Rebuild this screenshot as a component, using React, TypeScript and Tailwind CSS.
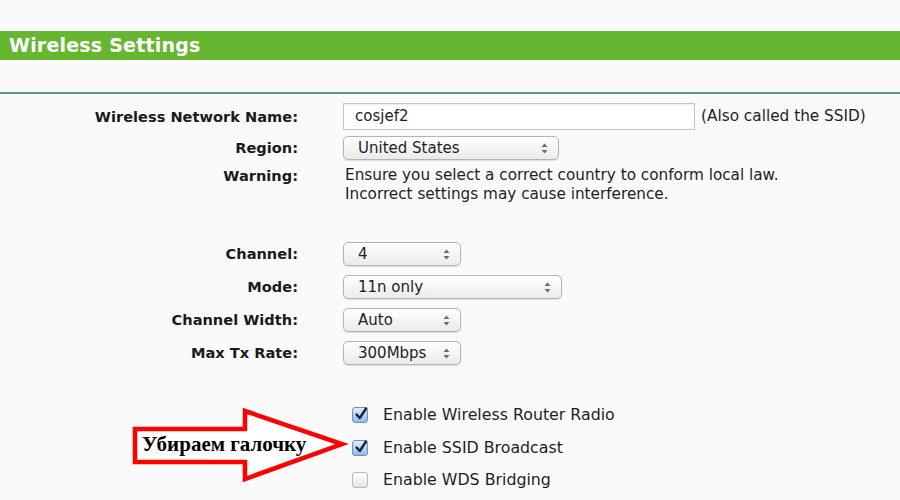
import type { ReactNode } from 'react';

function Arrows() {
  return (
    <svg width="7" height="11" viewBox="0 0 7 11" className="shrink-0">
      <path d="M3.5 0.5 L6.5 4 L0.5 4 Z" fill="#6b6b6b" />
      <path d="M3.5 10.5 L6.5 7 L0.5 7 Z" fill="#6b6b6b" />
    </svg>
  );
}

function Select({ value, width }: { value: string; width: string }) {
  return (
    <div
      className={`${width} h-[24px] flex items-center justify-between pl-[14px] pr-[10px] rounded-[5px] border border-[#b4b4b4] bg-gradient-to-b from-white to-[#ebebeb] shadow-[0_1px_1px_rgba(0,0,0,0.12)] text-[15px] text-[#1e1e1e]`}
    >
      <span>{value}</span>
      <Arrows />
    </div>
  );
}

function Row({ label, children, h = 'h-[24px]' }: { label: string; children: ReactNode; h?: string }) {
  return (
    <div className={`flex items-center ${h}`}>
      <div className="w-[298px] text-right font-bold text-[14.6px] text-[#1a1a1a]">{label}</div>
      <div className="ml-[45px] flex items-center">{children}</div>
    </div>
  );
}

function Check({ checked, label }: { checked: boolean; label: string }) {
  return (
    <div className="flex items-center h-[24px] pl-[352px]">
      {checked ? (
        <div className="w-[16px] h-[16px] rounded-[3px] border border-[#6f8fb8] bg-gradient-to-b from-[#e2eefb] to-[#8fbbec] relative">
          <svg width="16" height="16" viewBox="0 0 16 16" className="absolute -top-[2px] left-[0px]">
            <path d="M3.5 8.5 L6.8 12 L13 2.5" fill="none" stroke="#17223a" strokeWidth="2.4" strokeLinecap="round" strokeLinejoin="round" />
          </svg>
        </div>
      ) : (
        <div className="w-[16px] h-[16px] rounded-[3px] border border-[#b8b8b8] bg-gradient-to-b from-white to-[#e4e4e4]" />
      )}
      <span className="ml-[15px] text-[15.8px] text-[#1e1e1e]">{label}</span>
    </div>
  );
}

export default function App() {
  return (
    <div className="relative w-[900px] h-[500px] overflow-hidden bg-[#fafafa] font-['DejaVu_Sans',Verdana,sans-serif]">
      <div className="h-[31px]" />
      <div className="h-[29px] bg-[#66b630] flex items-center pl-[9px]">
        <h1 className="text-white font-bold text-[19px] tracking-[0.2px]">Wireless Settings</h1>
      </div>
      <div className="h-[32px]" />
      <div className="h-[2px] bg-[#5d9f76]" />

      <div className="pt-[9px]">
        <Row label="Wireless Network Name:" h="h-[27px]">
          <div className="w-[352px] h-[27px] border border-[#c4c4c4] bg-white flex items-center pl-[11px] text-[15px] text-[#1e1e1e] shadow-[inset_0_1px_1px_rgba(0,0,0,0.08)]">
            cosjef2
          </div>
          <span className="ml-[6px] text-[15.3px] text-[#1e1e1e]">(Also called the SSID)</span>
        </Row>
        <div className="h-[6px]" />
        <Row label="Region:">
          <Select value="United States" width="w-[216px]" />
        </Row>
        <div className="flex mt-[6px] text-[15.25px] leading-[19px]">
          <div className="w-[298px] text-right font-bold text-[14.6px] text-[#1a1a1a]">Warning:</div>
          <div className="ml-[47px] text-[#1e1e1e]">
            <div>Ensure you select a correct country to conform local law.</div>
            <div>Incorrect settings may cause interference.</div>
          </div>
        </div>

        <div className="h-[38px]" />
        <div className="flex flex-col gap-[9px]">
          <Row label="Channel:">
            <Select value="4" width="w-[118px]" />
          </Row>
          <Row label="Mode:">
            <Select value="11n only" width="w-[219px]" />
          </Row>
          <Row label="Channel Width:">
            <Select value="Auto" width="w-[118px]" />
          </Row>
          <Row label="Max Tx Rate:">
            <Select value="300Mbps" width="w-[118px]" />
          </Row>
        </div>

        <div className="h-[38px]" />
        <div className="flex flex-col gap-[8.5px]">
          <Check checked label="Enable Wireless Router Radio" />
          <Check checked label="Enable SSID Broadcast" />
          <Check checked={false} label="Enable WDS Bridging" />
        </div>
      </div>

      {/* annotation arrow */}
      <svg width="230" height="80" viewBox="0 0 230 80" className="absolute left-[131px] top-[406px]">
        <path
          d="M4 23 L114 23 L114 5 L211 38 L114 73 L114 56 L4 56 Z"
          fill="#ffffff"
          stroke="#ff0000"
          strokeWidth="4.5"
          strokeLinejoin="miter"
        />
      </svg>
      <div className="absolute left-[142px] top-[431px] font-['Liberation_Serif','Times_New_Roman',serif] font-bold text-[21px] leading-[26px] text-black">
        Убираем галочку
      </div>
    </div>
  );
}
